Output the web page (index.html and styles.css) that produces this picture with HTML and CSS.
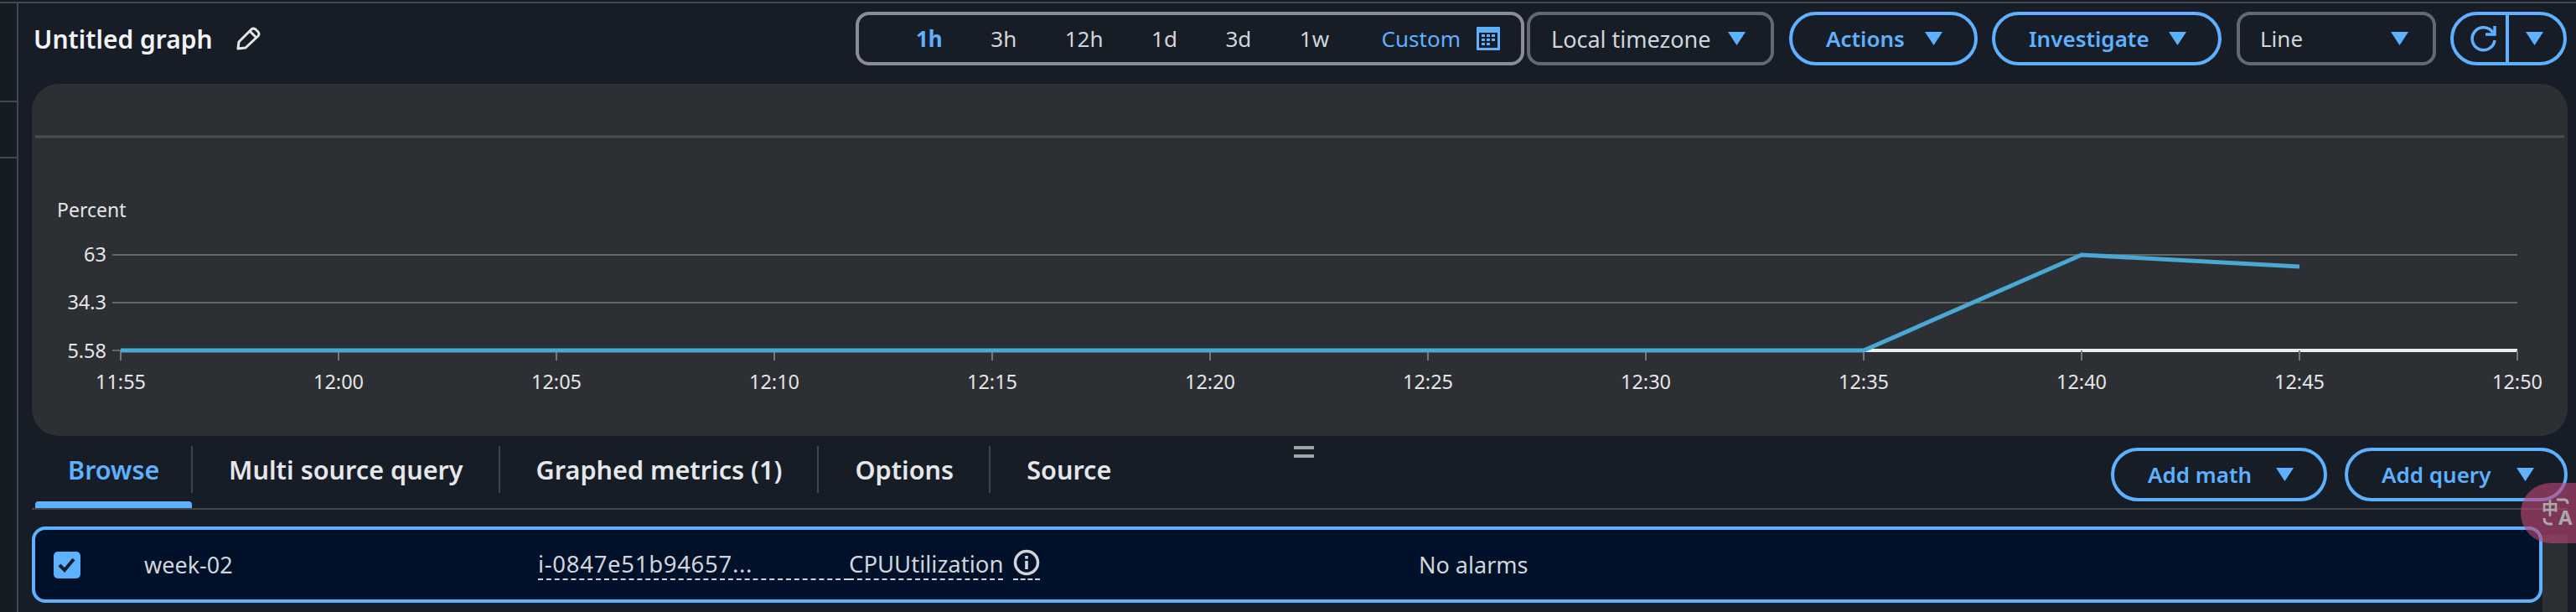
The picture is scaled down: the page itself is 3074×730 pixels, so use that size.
FILE: index.html
```html
<!DOCTYPE html>
<html>

	<head>
		<meta charset="UTF-8">
		<title>Untitled graph</title>
		<link rel="stylesheet" href="styles.css">
	</head>

	<body>
		<div class="topline"></div>
		<div class="page">
			<div class="rail">
				<div class="rail-cell first"></div>
				<div class="rail-cell second"></div>
			</div>
			<div class="main">
				<div class="toolbar">
					<div class="title">
						<span>Untitled graph</span>
						<svg class="pencil" width="30" height="28" viewBox="0 0 30 28">
							<path d="M3 26 L4 18 L19 3 Q21 1 24 3 L27 6 Q29 9 27 11 L12 25 Z M17 5 L25 13" fill="none" stroke="#e6e6e8" stroke-width="3" stroke-linejoin="round"/>
						</svg>
					</div>
					<div class="range">
						<a class="range-item on">1h</a>
						<a class="range-item">3h</a>
						<a class="range-item">12h</a>
						<a class="range-item">1d</a>
						<a class="range-item">3d</a>
						<a class="range-item">1w</a>
						<a class="range-custom">Custom
							<svg width="28" height="28" viewBox="0 0 28 28">
								<rect width="28" height="28" rx="1" fill="#5eb1ff"/>
								<rect x="3" y="7" width="22" height="18" fill="#161d26"/>
								<g fill="#5eb1ff">
									<rect x="6" y="9" width="4" height="3"/><rect x="12" y="9" width="4" height="3"/><rect x="18" y="9" width="4" height="3"/>
									<rect x="6" y="14" width="4" height="3"/><rect x="12" y="14" width="4" height="3"/><rect x="18" y="14" width="4" height="3"/>
									<rect x="6" y="19" width="4" height="3"/><rect x="12" y="19" width="4" height="3"/>
								</g>
							</svg>
						</a>
					</div>
					<div class="select tz"><span>Local timezone</span><i class="tri"></i></div>
					<div class="btn actions"><span>Actions</span><i class="tri"></i></div>
					<div class="btn investigate"><span>Investigate</span><i class="tri"></i></div>
					<div class="select line"><span>Line</span><i class="tri"></i></div>
					<div class="btn refresh">
						<div class="refresh-icon">
							<svg width="32" height="32" viewBox="0 0 32 32">
								<path d="M27 9 A13.5 13.5 0 1 0 29 18" fill="none" stroke="#5eb1ff" stroke-width="3.5"/>
								<path d="M18 11 H29 V1" fill="none" stroke="#5eb1ff" stroke-width="3.5"/>
							</svg>
						</div>
						<div class="refresh-drop"><i class="tri"></i></div>
					</div>
				</div>

				<div class="panel">
					<svg class="chart" width="3026" height="420" viewBox="38 100 3026 420">
						<line class="grid top" x1="42" y1="163" x2="3060" y2="163"/>
						<text class="ylabel" x="68" y="259">Percent</text>

						<line class="grid" x1="134" y1="304" x2="3004" y2="304"/>
						<line class="grid" x1="134" y1="361" x2="3004" y2="361"/>
						<line class="grid" x1="134" y1="418" x2="144" y2="418"/>
						<line class="base" x1="144" y1="418" x2="3004" y2="418"/>

						<g class="ticks">
							<line x1="144" y1="418" x2="144" y2="430"/>
							<line x1="404" y1="418" x2="404" y2="430"/>
							<line x1="664" y1="418" x2="664" y2="430"/>
							<line x1="924" y1="418" x2="924" y2="430"/>
							<line x1="1184" y1="418" x2="1184" y2="430"/>
							<line x1="1444" y1="418" x2="1444" y2="430"/>
							<line x1="1704" y1="418" x2="1704" y2="430"/>
							<line x1="1964" y1="418" x2="1964" y2="430"/>
							<line x1="2224" y1="418" x2="2224" y2="430"/>
							<line x1="2484" y1="418" x2="2484" y2="430"/>
							<line x1="2744" y1="418" x2="2744" y2="430"/>
							<line x1="3004" y1="418" x2="3004" y2="430"/>
						</g>

						<polyline class="series" points="144,418 2224,418 2484,304 2744,318"/>

						<g class="yticks">
							<text x="127" y="312">63</text>
							<text x="127" y="369">34.3</text>
							<text x="127" y="427">5.58</text>
						</g>
						<g class="xticks">
							<text x="144" y="464">11:55</text>
							<text x="404" y="464">12:00</text>
							<text x="664" y="464">12:05</text>
							<text x="924" y="464">12:10</text>
							<text x="1184" y="464">12:15</text>
							<text x="1444" y="464">12:20</text>
							<text x="1704" y="464">12:25</text>
							<text x="1964" y="464">12:30</text>
							<text x="2224" y="464">12:35</text>
							<text x="2484" y="464">12:40</text>
							<text x="2744" y="464">12:45</text>
							<text x="3004" y="464">12:50</text>
						</g>
					</svg>
				</div>

				<div class="tabs">
					<ul class="tab-list">
						<li class="tab browse">Browse</li>
						<li class="tab">Multi source query</li>
						<li class="tab">Graphed metrics (1)</li>
						<li class="tab">Options</li>
						<li class="tab last">Source</li>
					</ul>
					<div class="handle"><b></b><b></b></div>
					<div class="tab-actions">
						<div class="btn add-math"><span>Add math</span><i class="tri"></i></div>
						<div class="btn add-query"><span>Add query</span><i class="tri"></i></div>
					</div>
				</div>

				<div class="lower">
					<div class="row">
						<div class="cell cell-check">
							<span class="check">
								<svg width="32" height="32" viewBox="0 0 32 32">
									<path d="M7 16 L13 22 L24 9" fill="none" stroke="#161d26" stroke-width="4"/>
								</svg>
							</span>
						</div>
						<div class="cell cell-name">week-02</div>
						<div class="cell cell-id"><span class="dash">i-0847e51b94657...</span></div>
						<div class="cell cell-metric">
							<span class="dash">CPUUtilization</span>
							<span class="dash info">
								<svg width="32" height="32" viewBox="0 0 32 32">
									<circle cx="16" cy="16" r="13.5" fill="none" stroke="#d1d5db" stroke-width="3.5"/>
									<rect x="14.2" y="14" width="3.6" height="10" fill="#d1d5db"/>
									<rect x="14.2" y="8" width="3.6" height="3.6" fill="#d1d5db"/>
								</svg>
							</span>
						</div>
						<div class="cell cell-alarm">No alarms</div>
					</div>
					<div class="scroll-lane"></div>
				</div>
			</div>
		</div>
		<div class="translate">
			<svg class="translate-marks" width="40" height="36" viewBox="0 0 40 36">
				<path d="M17 4 H26 Q30 4 30 9 M2 26 Q2 33 8 33 H12" fill="none" stroke="#a9a9a9" stroke-width="3"/>
			</svg>
			<span class="zh">中</span>
			<span class="en">A</span>
		</div>
	</body>

</html>
```

FILE: styles.css
```css
* {
	margin: 0;
	padding: 0;
	box-sizing: border-box;
}

html,
body {
	width: 3074px;
	height: 730px;
	overflow: hidden;
	background-color: #161d26;
	font-family: "Noto Sans", "Open Sans", sans-serif;
	color: #d1d5db;
}

.topline {
	height: 2px;
	margin-top: 2px;
	background-color: #414750;
}

.page {
	display: flex;
	height: 726px;
}

.rail {
	width: 22px;
	flex-shrink: 0;
	border-right: 2px solid #414750;
	background-color: #151c24;
}

.rail-cell {
	border-bottom: 2px solid #414750;
}

.rail-cell.first {
	height: 118px;
}

.rail-cell.second {
	height: 67px;
}

.main {
	flex: 1;
	padding-left: 16px;
	min-width: 0;
	display: flex;
	flex-direction: column;
}

/* toolbar */
.toolbar {
	display: flex;
	align-items: center;
	height: 64px;
	margin-top: 10px;
	padding-right: 11px;
}

.title {
	flex: 1;
	display: flex;
	align-items: center;
	padding-left: 2px;
	font-size: 30px;
	font-weight: 600;
	color: #f3f3f7;
}

.pencil {
	margin-left: 27px;
}

.range {
	width: 798px;
	height: 64px;
	display: flex;
	align-items: center;
	gap: 57.5px;
	padding-left: 68px;
	border: 4px solid #8c8c94;
	border-radius: 16px;
	font-size: 26px;
}

.range-item.on {
	color: #5eb1ff;
	font-weight: 700;
}

.range-custom {
	display: flex;
	align-items: center;
	gap: 19px;
	margin-left: 5px;
	color: #5eb1ff;
}

.select,
.btn {
	height: 64px;
	display: flex;
	align-items: center;
	justify-content: space-between;
	font-size: 26px;
	border: 4px solid #656871;
}

.select {
	border-radius: 16px;
}

.btn {
	border-color: #5eb1ff;
	border-radius: 32px;
	color: #5eb1ff;
	font-weight: 600;
}

.tri {
	display: block;
	width: 21px;
	height: 16px;
	background-color: #5eb1ff;
	clip-path: polygon(0 0, 100% 0, 50% 100%);
}

.tz {
	width: 295px;
	margin-left: 3px;
	padding: 0 30px 0 25px;
	font-size: 27px;
}

.actions {
	width: 225px;
	margin-left: 18px;
	padding: 0 38px 0 40px;
}

.investigate {
	width: 274px;
	margin-left: 17px;
	padding: 0 38px 0 40px;
}

.line {
	width: 238px;
	margin-left: 18px;
	padding: 0 29px 0 24px;
}

.refresh {
	width: 139px;
	margin-left: 17px;
	justify-content: flex-start;
}

.refresh-icon {
	width: 66px;
	height: 100%;
	padding-left: 20px;
	display: flex;
	align-items: center;
	border-right: 4px solid #5eb1ff;
}

.refresh-drop {
	flex: 1;
	display: flex;
	justify-content: center;
	padding-right: 4px;
}

/* chart */
.panel {
	height: 420px;
	margin-top: 22px;
	margin-right: 10px;
	background-color: #2c2f33;
	border-radius: 32px;
	overflow: hidden;
}

.chart {
	display: block;
}

.grid {
	stroke: #666;
	stroke-width: 2;
}

.grid.top {
	stroke: #4b4e52;
	stroke-width: 3;
}

.base {
	stroke: #ececec;
	stroke-width: 4;
}

.ticks line {
	stroke: #777;
	stroke-width: 2;
}

.series {
	fill: none;
	stroke: #4aa8d4;
	stroke-width: 5;
}

.chart text {
	font-family: "Noto Sans", "Open Sans", sans-serif;
	font-size: 23.5px;
	fill: #e6e6e6;
}

.chart .ylabel {
	font-size: 23px;
}

.yticks text {
	text-anchor: end;
}

.xticks text {
	text-anchor: middle;
}

/* tabs */
.tabs {
	height: 88px;
	margin-right: 10px;
	display: flex;
	border-bottom: 2px solid #414449;
}

.tab-list {
	display: flex;
	list-style: none;
	padding-top: 12px;
}

.tab {
	height: 56px;
	display: flex;
	align-items: center;
	padding: 0 42px 0 43px;
	border-right: 2px solid #414449;
	font-size: 30.6px;
	font-weight: 600;
	color: #e6e7ea;
}

.tab.browse {
	width: 192px;
	padding-left: 43px;
	color: #5eb1ff;
	position: relative;
}

.tab.browse::after {
	content: "";
	position: absolute;
	left: 4px;
	right: -1px;
	top: 66px;
	height: 8px;
	background-color: #5eb1ff;
	border-radius: 4px 4px 0 0;
}

.tab.last {
	border-right: 0;
}

.handle {
	width: 24px;
	margin-left: 176px;
	padding-top: 12px;
}

.handle b {
	display: block;
	height: 4px;
	margin-bottom: 6px;
	background-color: #9ba7a6;
}

.tab-actions {
	margin-left: auto;
	display: flex;
	gap: 21px;
	padding-top: 14px;
}

.add-math {
	width: 258px;
	padding: 0 36px 0 40px;
}

.add-query {
	width: 266px;
	padding: 0 36px 0 40px;
}

/* result row */
.lower {
	flex: 1;
	display: flex;
	padding-top: 20px;
}

.row {
	width: 2996px;
	height: 91px;
	display: flex;
	align-items: center;
	border: 4px solid #5eb1ff;
	border-radius: 16px;
	background-color: #001129;
	font-size: 27.5px;
}

.cell-check {
	width: 130px;
	padding-left: 22px;
}

.check {
	display: block;
	width: 32px;
	height: 32px;
	border-radius: 5px;
	background-color: #5eb1ff;
}

.cell-name {
	width: 470px;
	font-size: 27px;
}

.cell-id {
	width: 371px;
	letter-spacing: 0.7px;
}

.cell-metric {
	width: 680px;
	display: flex;
	align-items: center;
	gap: 12px;
}

.cell-alarm {
	font-size: 27px;
}

.dash {
	display: block;
	line-height: 35px;
	border-bottom: 2px dashed #d1d5db;
}

.info {
	height: 37px;
}

.scroll-lane {
	width: 30px;
	margin-top: 10px;
	background-color: #2c2f33;
}

/* translate widget */
.translate {
	position: absolute;
	left: 3008px;
	top: 576px;
	width: 66px;
	height: 72px;
	border-radius: 36px 0 0 36px;
	background-color: rgba(190, 70, 120, 0.62);
	color: #a9a9a9;
	font-weight: 700;
}

.translate-marks {
	position: absolute;
	left: 26px;
	top: 16px;
}

.translate .zh {
	position: absolute;
	left: 25px;
	top: 20px;
	font-family: "Noto Sans CJK SC", sans-serif;
	font-size: 20px;
	line-height: 20px;
}

.translate .en {
	position: absolute;
	left: 45px;
	top: 31px;
	font-size: 24px;
	line-height: 20px;
}
```
